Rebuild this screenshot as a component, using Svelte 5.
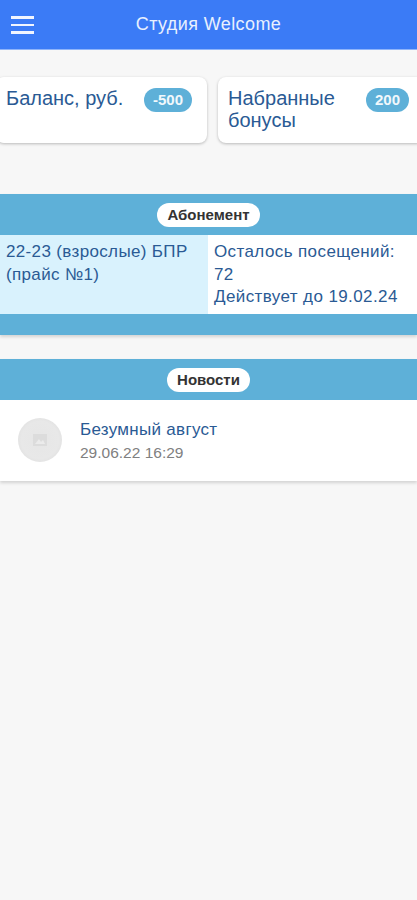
<script lang="ts">
  let cards = [
    { label: 'Баланс, руб.', value: '-500' },
    { label: 'Набранные бонусы', value: '200' }
  ];
</script>

<div class="page">
  <header class="topbar">
    <button class="burger" aria-label="Меню"><span></span><span></span><span></span></button>
    <h1>Студия Welcome</h1>
  </header>

  <div class="cards">
    {#each cards as card}
      <div class="card">
        <span class="label">{card.label}</span>
        <span class="badge">{card.value}</span>
      </div>
    {/each}
  </div>

  <section class="panel sub">
    <div class="band"><span class="pill">Абонемент</span></div>
    <div class="sub-row">
      <div class="sub-name">22-23 (взрослые) БПР (прайс №1)</div>
      <div class="sub-info">
        <div>Осталось посещений: 72</div>
        <div>Действует до 19.02.24</div>
      </div>
    </div>
    <div class="band-foot"></div>
  </section>

  <section class="panel news">
    <div class="band"><span class="pill">Новости</span></div>
    <div class="news-row">
      <div class="thumb">
        <svg width="14" height="12" viewBox="0 0 14 12">
          <rect width="14" height="12" fill="#dcdcdc" />
          <path d="M2 10 L6 5 L8 8 L10 6 L12 10 Z" fill="#ebebeb" />
        </svg>
      </div>
      <div class="news-text">
        <div class="news-title">Безумный август</div>
        <div class="news-date">29.06.22 16:29</div>
      </div>
    </div>
  </section>
</div>

<style>
  :global(body) {
    margin: 0;
    background: #f7f7f7;
  }
  .page {
    height: 900px;
    overflow: hidden;
    font-family: "Liberation Sans", Arial, sans-serif;
    background: #f7f7f7;
  }
  .topbar {
    height: 49px;
    background: #3b7bf6;
    display: flex;
    align-items: center;
    justify-content: center;
    position: relative;
    border-bottom: 1px solid #8fb4fa;
  }
  .topbar h1 {
    margin: 0 0 1px;
    font-size: 18px;
    letter-spacing: 0.4px;
    font-weight: 400;
    color: #e8f0fe;
  }
  .burger {
    position: absolute;
    left: 11px;
    top: 16px;
    width: 23px;
    padding: 0;
    border: 0;
    background: none;
    display: flex;
    flex-direction: column;
    gap: 5px;
  }
  .burger span {
    height: 2.5px;
    background: #f1f5ff;
  }
  .cards {
    display: grid;
    grid-template-columns: 211px 206px;
    gap: 11px;
    margin: 27px 0 0 -4px;
  }
  .card {
    height: 66px;
    box-sizing: border-box;
    display: flex;
    justify-content: space-between;
    align-items: flex-start;
    padding: 10px 15px 0 10px;
    background: #fff;
    border-radius: 8px;
    box-shadow: 0 1px 3px rgba(0, 0, 0, 0.25);
  }
  .label {
    width: 125px;
    font-size: 20px;
    line-height: 22px;
    color: #2a5a94;
  }
  .badge {
    margin-top: 1px;
    padding: 0 9px;
    height: 24px;
    line-height: 24px;
    border-radius: 12px;
    background: #5eb0d8;
    color: #f1f8fc;
    font-size: 15px;
    font-weight: 700;
  }
  .panel {
    box-shadow: 0 2px 3px rgba(0, 0, 0, 0.15);
  }
  .sub {
    margin-top: 51px;
  }
  .news {
    margin-top: 24px;
  }
  .band {
    height: 41px;
    box-sizing: border-box;
    background: #5eb0d8;
    display: flex;
    align-items: center;
    justify-content: center;
  }
  .pill {
    height: 24px;
    line-height: 24px;
    padding: 0 10px;
    border-radius: 12px;
    background: #fff;
    color: #333;
    font-size: 15px;
    font-weight: 700;
  }
  .sub-row {
    display: grid;
    grid-template-columns: 208px 1fr;
    height: 79px;
    font-size: 17px;
    line-height: 22.5px;
    color: #2a5a94;
  }
  .sub-name {
    background: #d9f2fd;
    padding: 6px 6px 0;
    letter-spacing: 0.35px;
  }
  .sub-info {
    background: #fff;
    padding: 6px 6px 0;
    letter-spacing: 0.4px;
  }
  .band-foot {
    height: 21px;
    background: #5eb0d8;
  }
  .news-row {
    background: #fff;
    height: 81px;
    box-sizing: border-box;
    display: flex;
    align-items: center;
    gap: 18px;
    padding: 0 18px 1px;
  }
  .thumb {
    width: 44px;
    height: 44px;
    border-radius: 50%;
    background: radial-gradient(circle, #e6e6e6 0%, #e8e8e8 60%, #d8d8d8 100%);
    display: flex;
    align-items: center;
    justify-content: center;
  }
  .news-text {
    padding-top: 2px;
  }
  .news-title {
    font-size: 17px;
    letter-spacing: 0.3px;
    line-height: 22px;
    color: #2a5a94;
  }
  .news-date {
    font-size: 15.5px;
    line-height: 23px;
    color: #808080;
  }
</style>
